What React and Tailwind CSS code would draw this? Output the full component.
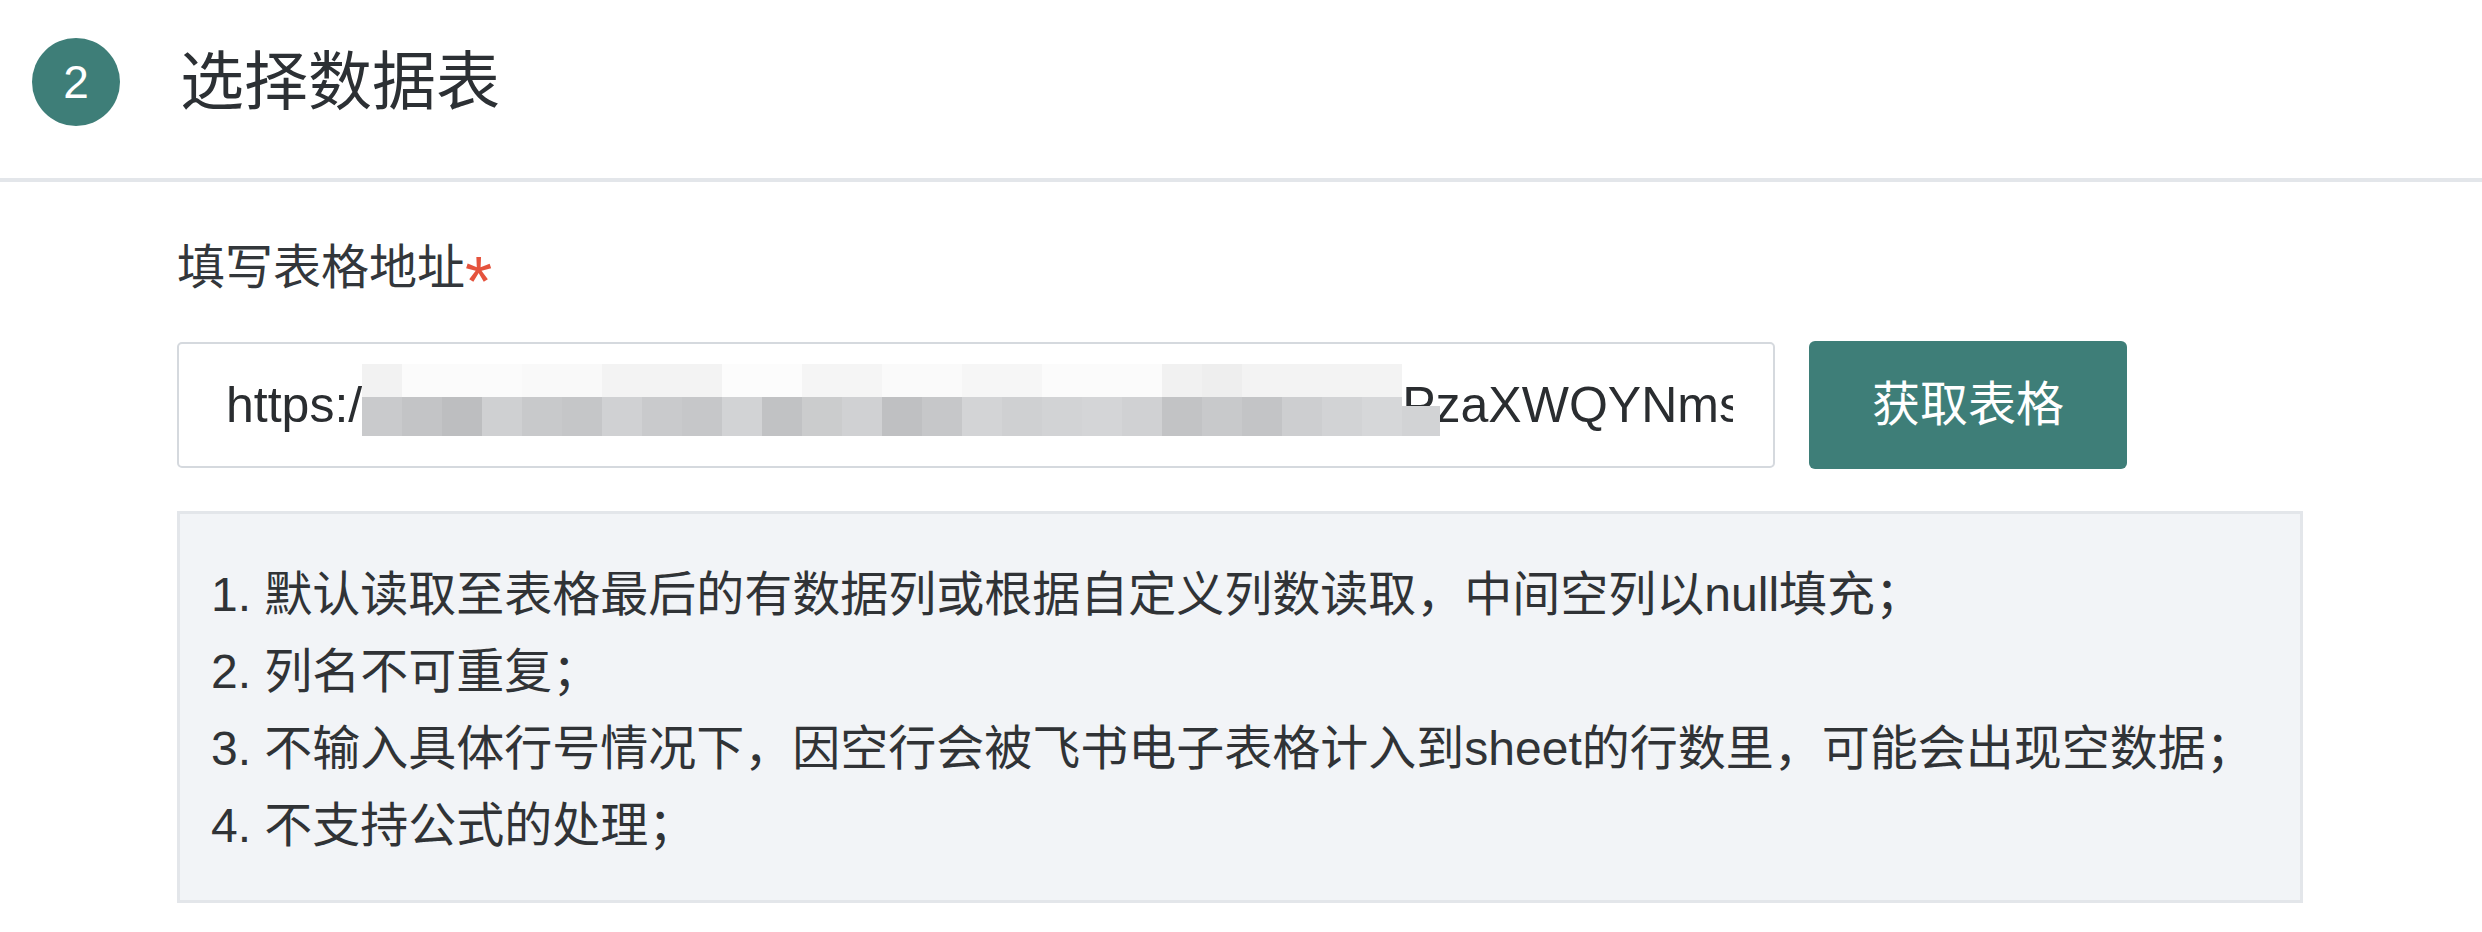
import React from "react";

const topCols = [
  "bg-[#f2f2f2]", "bg-[#fbfbfb]", "bg-[#fbfbfb]", "bg-[#fbfbfb]", "bg-[#f9f9f9]", "bg-[#f9f9f9]",
  "bg-[#f3f3f3]", "bg-[#f3f3f3]", "bg-[#f3f3f3]", "bg-[#fcfcfc]", "bg-[#fcfcfc]", "bg-[#f5f5f5]",
  "bg-[#f5f5f5]", "bg-[#fafafa]", "bg-[#fafafa]", "bg-[#f6f6f6]", "bg-[#f6f6f6]", "bg-[#fbfbfb]",
  "bg-[#fbfbfb]", "bg-[#fbfbfb]", "bg-[#f1f1f1]", "bg-[#eeeeee]", "bg-[#f3f3f3]", "bg-[#f3f3f3]",
  "bg-[#f3f3f3]", "bg-[#f3f3f3]",
];

const bottomCols = [
  "bg-[#c9cacc]", "bg-[#c3c4c6]", "bg-[#bdbec0]", "bg-[#cfd0d2]", "bg-[#c8c9cb]", "bg-[#c5c6c8]",
  "bg-[#d0d1d3]", "bg-[#c9cacc]", "bg-[#c6c7c9]", "bg-[#d2d3d5]", "bg-[#c1c2c4]", "bg-[#cbcccd]",
  "bg-[#d0d1d3]", "bg-[#bfc0c2]", "bg-[#c6c7c9]", "bg-[#d3d4d6]", "bg-[#cfd0d2]", "bg-[#d2d3d5]",
  "bg-[#d4d5d7]", "bg-[#d0d1d3]", "bg-[#c2c3c5]", "bg-[#c8c9cb]", "bg-[#c3c4c6]", "bg-[#cdced0]",
  "bg-[#d2d3d5]", "bg-[#d6d7d9]",
];

function Mosaic() {
  return (
    <div className="relative flex shrink-0 w-[1040px] h-[72px] mb-[10px]">
      {topCols.map((t, i) => (
        <div key={i} className="flex flex-col w-[40px] h-full">
          <div className={`h-[33px] ${t}`} />
          <div className={`h-[39px] ${bottomCols[i]}`} />
        </div>
      ))}
      <div className="absolute left-full bottom-0 w-[38px] h-[30px] bg-[#d2d3d5]" />
    </div>
  );
}

const notes = [
  "1. 默认读取至表格最后的有数据列或根据自定义列数读取，中间空列以null填充；",
  "2. 列名不可重复；",
  "3. 不输入具体行号情况下，因空行会被飞书电子表格计入到sheet的行数里，可能会出现空数据；",
  "4. 不支持公式的处理；",
];

export default function App() {
  return (
    <div className="w-[2482px] h-[932px] bg-white overflow-hidden font-['Liberation_Sans','Noto_Sans_CJK_SC',sans-serif] text-[#303336]">
      {/* Header */}
      <div className="flex items-center gap-[60px] pl-[32px] pt-[38px] pb-[52px]">
        <div className="flex items-center justify-center w-[88px] h-[88px] rounded-full bg-[#3e7e78] text-white text-[46px] leading-none">
          2
        </div>
        <div className="text-[64px] leading-none text-[#2c3034]">选择数据表</div>
      </div>
      <div className="h-[4px] bg-[#e3e6ea]" />

      {/* Content */}
      <div className="pl-[177px] pt-[56px]">
        <div className="flex items-start h-[60px] text-[48px] leading-[60px] text-[#33373b]">
          <span>填写表格地址</span>
          <span className="text-[#e5533d] text-[70px] leading-[60px] mt-[14px]">*</span>
        </div>

        <div className="flex items-center mt-[43px]">
          <div className="flex items-center w-[1598px] h-[126px] border-[2px] border-[#d5d9de] rounded-[5px] bg-white pl-[47px] pr-[40px]">
            <div className="flex items-center w-full h-full overflow-hidden whitespace-nowrap text-[50px] text-[#2a2d30]">
              <span className="shrink-0">https:/</span>
              <Mosaic />
              <span className="shrink-0">PzaXWQYNms</span>
            </div>
          </div>
          <button className="ml-[34px] w-[318px] h-[128px] rounded-[6px] bg-[#3e7e78] text-white text-[48px] leading-none">
            获取表格
          </button>
        </div>

        <div className="mt-[42px] w-[2126px] h-[392px] border-[3px] border-[#e3e6ea] bg-[#f2f4f7] pl-[31px] pt-[42px]">
          {notes.map((n, i) => (
            <div key={i} className="text-[48px] leading-[77px] whitespace-nowrap">
              {n}
            </div>
          ))}
        </div>
      </div>
    </div>
  );
}
